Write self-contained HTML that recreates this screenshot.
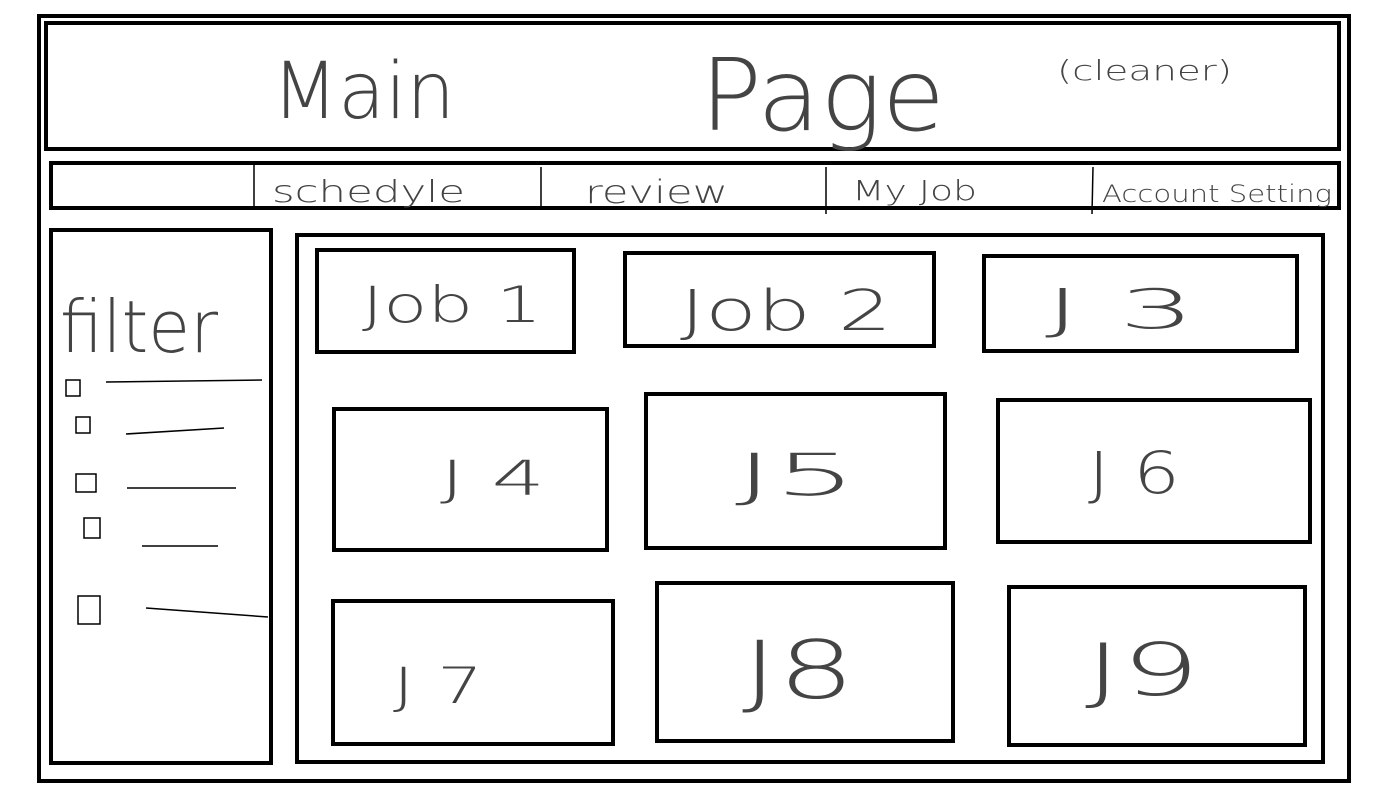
<!DOCTYPE html>
<html><head><meta charset="utf-8"><style>
html,body{margin:0;padding:0;background:#fff;width:1391px;height:811px;overflow:hidden}
svg{display:block}
text{font-family:"DejaVu Sans ExtraLight","DejaVu Sans","Liberation Sans",sans-serif;font-weight:200;fill:#444}
</style></head><body>
<svg width="1391" height="811" viewBox="0 0 1391 811" xmlns="http://www.w3.org/2000/svg">
<g fill="none" stroke="#000" stroke-width="4">
<rect x="39" y="16" width="1310" height="765"/>
<rect x="46" y="23" width="1293" height="126"/>
<rect x="51" y="163" width="1288" height="45"/>
<rect x="51" y="230" width="220" height="533"/>
<rect x="297" y="235" width="1026" height="527"/>
<rect x="317" y="250" width="257" height="102"/>
<rect x="625" y="253" width="309" height="93"/>
<rect x="984" y="256" width="313" height="95"/>
<rect x="334" y="409" width="273" height="141"/>
<rect x="646" y="394" width="299" height="154"/>
<rect x="998" y="400" width="312" height="142"/>
<rect x="333" y="601" width="280" height="143"/>
<rect x="657" y="583" width="296" height="158"/>
<rect x="1009" y="587" width="296" height="158"/>
</g>
<g stroke="#000" stroke-width="1.5" fill="none">
<line x1="254" y1="165" x2="254" y2="207"/>
<line x1="541" y1="167" x2="541" y2="207"/>
<line x1="826" y1="167" x2="826" y2="214"/>
<line x1="1093" y1="167" x2="1092" y2="214"/>
<line x1="106" y1="382" x2="262" y2="380"/>
<line x1="126" y1="434" x2="224" y2="428"/>
<line x1="127" y1="488" x2="236" y2="488"/>
<line x1="142" y1="546" x2="218" y2="546"/>
<line x1="146" y1="608" x2="268" y2="617"/>
<rect x="66" y="380" width="14" height="16"/>
<rect x="76" y="417" width="14" height="16"/>
<rect x="76" y="474" width="20" height="18"/>
<rect x="84" y="518" width="16" height="20"/>
<rect x="78" y="596" width="22" height="28"/>
</g>
<g>
<text x="272" y="118" font-size="78" textLength="183" lengthAdjust="spacingAndGlyphs">Main</text>
<text x="700" y="130" font-size="100" textLength="245" lengthAdjust="spacingAndGlyphs">Page</text>
<text x="1057" y="80" font-size="28" textLength="175" lengthAdjust="spacingAndGlyphs">(cleaner)</text>
<text x="272" y="202" font-size="30" textLength="193" lengthAdjust="spacingAndGlyphs">schedyle</text>
<text x="585" y="203" font-size="32" textLength="143" lengthAdjust="spacingAndGlyphs">review</text>
<text x="852" y="200" font-size="28" textLength="125" lengthAdjust="spacingAndGlyphs">My Job</text>
<text x="1102" y="202" font-size="24" textLength="230" lengthAdjust="spacingAndGlyphs">Account  Setting</text>
<text x="60" y="352" font-size="72" textLength="158" lengthAdjust="spacingAndGlyphs">filter</text>
<text x="362" y="322" font-size="50" textLength="180" lengthAdjust="spacingAndGlyphs">Job   1</text>
<text x="680" y="330" font-size="56" textLength="212" lengthAdjust="spacingAndGlyphs">Job  2</text>
<text x="1045" y="328" font-size="54" textLength="150" lengthAdjust="spacingAndGlyphs">J    3</text>
<text x="440" y="495" font-size="48" textLength="105" lengthAdjust="spacingAndGlyphs">J  4</text>
<text x="735" y="495" font-size="58" textLength="122" lengthAdjust="spacingAndGlyphs">J5</text>
<text x="1088" y="493" font-size="58" textLength="92" lengthAdjust="spacingAndGlyphs">J  6</text>
<text x="393" y="703" font-size="50" textLength="90" lengthAdjust="spacingAndGlyphs">J 7</text>
<text x="742" y="698" font-size="80" textLength="113" lengthAdjust="spacingAndGlyphs">J8</text>
<text x="1085" y="695" font-size="72" textLength="115" lengthAdjust="spacingAndGlyphs">J9</text>
</g>
</svg>
</body></html>
